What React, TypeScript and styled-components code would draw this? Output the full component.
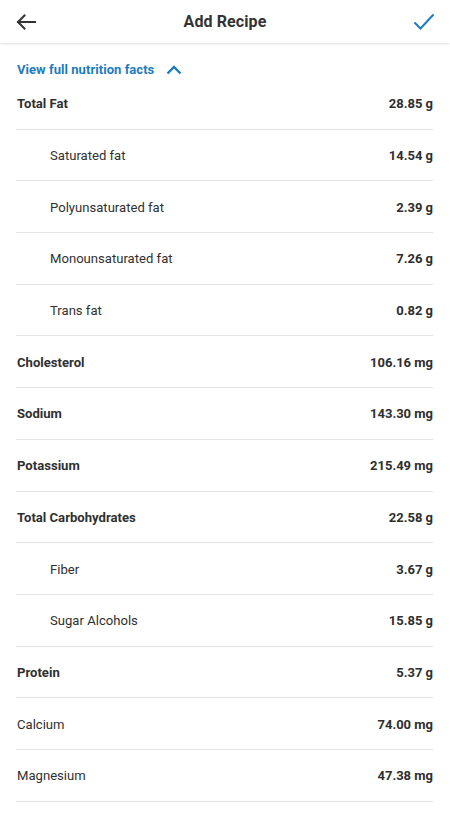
import React from "react";
import styled, { createGlobalStyle } from "styled-components";

const Global = createGlobalStyle`
  html, body { margin: 0; padding: 0; background: #fff; }
  body { font-family: Roboto, "Noto Sans", Arial, sans-serif; -webkit-font-smoothing: antialiased; }
  * { box-sizing: border-box; }
`;

const Page = styled.div`
  width: 450px;
  min-height: 817px;
  background: #fff;
  overflow: hidden;
`;

const Header = styled.header`
  height: 43px;
  display: flex;
  align-items: center;
  justify-content: space-between;
  padding: 0 14px 0 14px;
  background: #fff;
  box-shadow: 0 1px 2px rgba(0, 0, 0, 0.12);
  position: relative;
  z-index: 1;
`;

const IconButton = styled.button`
  width: 24px;
  height: 24px;
  padding: 0;
  border: none;
  background: none;
  display: flex;
  align-items: center;
  justify-content: center;
`;

const Title = styled.h1`
  margin: 0;
  font-size: 16px;
  font-weight: 700;
  color: #333;
  letter-spacing: 0.1px;
`;

const Content = styled.main`
  padding: 0 17px 0 16px;
`;

const Toggle = styled.div`
  display: flex;
  align-items: center;
  gap: 12px;
  height: 35px;
  padding-top: 18px;
  padding-left: 1px;
  color: #1b7cc2;
  font-size: 13px;
  font-weight: 700;
  letter-spacing: 0.05px;
`;

const Row = styled.div<{ $indent?: boolean }>`
  height: 51.7px;
  display: flex;
  align-items: center;
  justify-content: space-between;
  border-bottom: 1.5px solid #e4e4e4;
  padding-left: ${(p) => (p.$indent ? "34px" : "1px")};
  padding-top: 1px;
`;

const Label = styled.span<{ $bold?: boolean }>`
  font-size: 13.1px;
  font-weight: ${(p) => (p.$bold ? 700 : 400)};
  color: #303030;
`;

const Value = styled.span`
  font-size: 13px;
  font-weight: 700;
  color: #2e2e2e;
`;

type Item = { label: string; value: string; kind: "main" | "sub" | "plain" };

const items: Item[] = [
  { label: "Total Fat", value: "28.85 g", kind: "main" },
  { label: "Saturated fat", value: "14.54 g", kind: "sub" },
  { label: "Polyunsaturated fat", value: "2.39 g", kind: "sub" },
  { label: "Monounsaturated fat", value: "7.26 g", kind: "sub" },
  { label: "Trans fat", value: "0.82 g", kind: "sub" },
  { label: "Cholesterol", value: "106.16 mg", kind: "main" },
  { label: "Sodium", value: "143.30 mg", kind: "main" },
  { label: "Potassium", value: "215.49 mg", kind: "main" },
  { label: "Total Carbohydrates", value: "22.58 g", kind: "main" },
  { label: "Fiber", value: "3.67 g", kind: "sub" },
  { label: "Sugar Alcohols", value: "15.85 g", kind: "sub" },
  { label: "Protein", value: "5.37 g", kind: "main" },
  { label: "Calcium", value: "74.00 mg", kind: "plain" },
  { label: "Magnesium", value: "47.38 mg", kind: "plain" },
];

export default function App() {
  return (
    <Page>
      <Global />
      <Header>
        <IconButton aria-label="Back">
          <svg width="20" height="16" viewBox="0 0 20 16" fill="none">
            <path d="M19 8H2M8.5 1.5L2 8l6.5 6.5" stroke="#333" strokeWidth="2" strokeLinecap="square" />
          </svg>
        </IconButton>
        <Title>Add Recipe</Title>
        <IconButton aria-label="Save">
          <svg width="22" height="18" viewBox="0 0 22 18" fill="none">
            <path d="M1.5 9.5L7.5 15.5L20.5 1.5" stroke="#1b7cc2" strokeWidth="2" />
          </svg>
        </IconButton>
      </Header>
      <Content>
        <Toggle>
          <span>View full nutrition facts</span>
          <svg width="16" height="10" viewBox="0 0 16 10" fill="none">
            <path d="M1.5 8.5L8 2l6.5 6.5" stroke="#1b7cc2" strokeWidth="2.4" />
          </svg>
        </Toggle>
        {items.map((it) => (
          <Row key={it.label} $indent={it.kind === "sub"}>
            <Label $bold={it.kind === "main"}>{it.label}</Label>
            <Value>{it.value}</Value>
          </Row>
        ))}
      </Content>
    </Page>
  );
}
